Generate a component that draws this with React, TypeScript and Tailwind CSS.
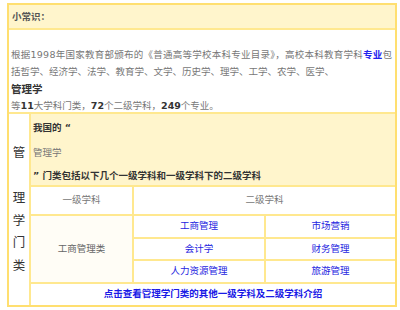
const font = { fontFamily: '"DejaVu Sans", "Noto Sans CJK SC", sans-serif' };

export default function App() {
  return (
    <div className="h-[310px] w-[400px] bg-white pl-[7px] pt-[3px]" style={font}>
      <div className="flex h-[304px] w-[390px] flex-col gap-[2px] border-2 border-[#ffdf70] bg-[#ffe88f]">
        {/* header */}
        <div className="flex h-[23px] shrink-0 items-center bg-[#fff5cc] pl-[3px] pt-[2px] text-[9.5px] font-bold text-[#555]">
          小常识：
        </div>

        {/* intro paragraph */}
        <div className="h-[82px] shrink-0 bg-white pl-[2px] pt-[16px] text-[9.5px] leading-[17px] text-[#777]">
          <p className="whitespace-nowrap tracking-[0.25px]">
            根据1998年国家教育部颁布的《普通高等学校本科专业目录》，高校本科教育学科
            <span className="font-bold text-[#2222ee]">专业</span>包
          </p>
          <p>括哲学、经济学、法学、教育学、文学、历史学、理学、工学、农学、医学、</p>
          <p className="text-[10.5px] font-bold leading-[19px] text-[#333]">管理学</p>
          <p className="leading-[13px]">
            等<b className="text-[#333]">11</b>大学科门类，<b className="text-[#333]">72</b>个二级学科，
            <b className="text-[#333]">249</b>个专业。
          </p>
        </div>

        {/* category table */}
        <div className="flex min-h-0 flex-1 gap-[2px]">
          <div className="flex w-[20px] shrink-0 items-center justify-center bg-white">
            <div className="flex flex-col items-center text-[12.5px] leading-[22.5px] text-[#333]">
              <span>管</span>
              <span>&nbsp;</span>
              <span>理</span>
              <span>学</span>
              <span>门</span>
              <span>类</span>
            </div>
          </div>

          <div className="flex flex-1 flex-col gap-[2px]">
            <div className="flex h-[71px] shrink-0 flex-col bg-[#fff5cc] pl-[2px] pt-[8px] text-[9.5px] text-[#333]">
              <div className="h-[25px] font-bold leading-[12px]">我国的 “</div>
              <div className="h-[23px] leading-[12px] text-[#777]">管理学</div>
              <div className="font-bold leading-[12px]">” 门类包括以下几个一级学科和一级学科下的二级学科</div>
            </div>

            <div className="grid flex-1 grid-cols-[101px_130px_1fr] grid-rows-[27px_21px_20px_21px_1fr] gap-[2px] text-[9.5px]">
              <div className="flex items-center justify-center bg-white text-[#777]">一级学科</div>
              <div className="col-span-2 flex items-center justify-center bg-white text-[#777]">二级学科</div>

              <div className="row-span-3 flex items-center justify-center bg-[#fffdf6] text-[#666]">工商管理类</div>
              <div className="flex items-center justify-center bg-white text-[#2525e0]">工商管理</div>
              <div className="flex items-center justify-center bg-white text-[#2525e0]">市场营销</div>
              <div className="flex items-center justify-center bg-white text-[#2525e0]">会计学</div>
              <div className="flex items-center justify-center bg-white text-[#2525e0]">财务管理</div>
              <div className="flex items-center justify-center bg-white text-[#2525e0]">人力资源管理</div>
              <div className="flex items-center justify-center bg-white text-[#2525e0]">旅游管理</div>

              <div className="col-span-3 flex items-center justify-center bg-white font-bold text-[#1a1ae6]">
                点击查看管理学门类的其他一级学科及二级学科介绍
              </div>
            </div>
          </div>
        </div>
      </div>
    </div>
  );
}
